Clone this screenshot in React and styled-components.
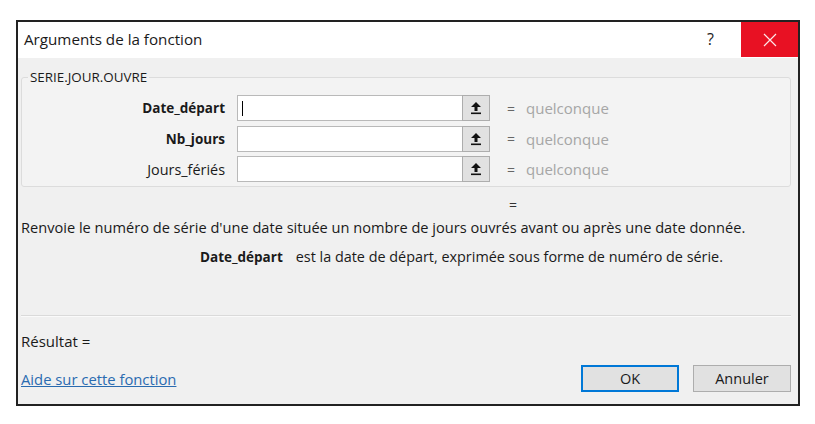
import React from "react";
import styled, { createGlobalStyle } from "styled-components";

const Global = createGlobalStyle`
  html, body { margin: 0; padding: 0; background: #ffffff; }
  body { font-family: "Open Sans", "Noto Sans", sans-serif; color: #000; }
  #root { padding: 20px 0 0 16px; }
  * { box-sizing: border-box; }
`;

const Dialog = styled.div`
  width: 784px;
  height: 386px;
  border: 2px solid #222;
  background: #f0f0f0;
  display: flex;
  flex-direction: column;
`;

const TitleBar = styled.div`
  height: 36px;
  background: #fff;
  display: flex;
  align-items: flex-start;
  flex-shrink: 0;
`;

const Title = styled.div`
  flex: 1;
  padding: 7px 0 0 6px;
  font-size: 15.2px;
  color: #1a1a1a;
`;

const Help = styled.div`
  width: 57px;
  padding-top: 6px;
  text-align: center;
  font-size: 16px;
  color: #222;
  margin-right: 2px;
`;

const Close = styled.div`
  width: 57px;
  height: 35px;
  background: #e81123;
  display: flex;
  align-items: center;
  justify-content: center;
`;

const Body = styled.div`
  flex: 1;
  display: flex;
  flex-direction: column;
  padding: 10px 7px 0 3px;
`;

const Group = styled.fieldset`
  margin: 0;
  border: 1px solid #dcdcdc;
  border-radius: 3px;
  background: #f3f3f3;
  padding: 9px 0 4px 6px;
  display: grid;
  grid-template-columns: 209px 225px 28px auto;
  grid-auto-rows: 26px;
  row-gap: 4.5px;
  align-items: center;
`;

const Legend = styled.legend`
  padding: 0 2px;
  font-size: 13.4px;
  line-height: 18px;
  color: #1a1a1a;
`;

const Label = styled.div`
  text-align: right;
  padding-right: 12px;
  font-size: ${(p) => (p.$bold ? "13.5px" : "14.4px")};
  font-weight: ${(p) => (p.$bold ? 700 : 400)};
  color: #1a1a1a;
`;

const Input = styled.div`
  height: 26px;
  background: #fff;
  border: 1px solid #b9b9b9;
  border-right: none;
  display: flex;
  align-items: center;
  padding-left: 4px;
`;

const Caret = styled.span`
  width: 1px;
  height: 15px;
  background: #000;
`;

const PickBtn = styled.div`
  height: 26px;
  background: #e1e1e1;
  border: 1px solid #adadad;
  display: flex;
  align-items: center;
  justify-content: center;
`;

const Value = styled.div`
  padding-left: 17px;
  font-size: 15px;
  color: #a6a6a6;
  display: flex;
  align-items: center;
  gap: 11px;
`;

const Eq = styled.span`
  color: #666;
  font-size: 14px;
`;

const CenterEq = styled.div`
  margin: 10px 0 0 488px;
  font-size: 14px;
  height: 16px;
  line-height: 16px;
  color: #333;
`;

const Desc = styled.div`
  margin-top: 4px;
  font-size: 14.6px;
  color: #1a1a1a;
  line-height: 20px;
  white-space: nowrap;
`;

const ParamDesc = styled.div`
  margin-top: 10px;
  padding-left: 179px;
  line-height: 20px;
  color: #1a1a1a;
  display: flex;
  gap: 13px;
  white-space: nowrap;
`;

const Bold = styled.b`
  font-weight: 700;
  font-size: 13.5px;
`;

const ParamText = styled.span`
  font-size: 14.4px;
`;

const Separator = styled.div`
  margin-top: 48px;
  height: 2px;
  border-top: 1px solid #dadada;
  border-bottom: 1px solid #fafafa;
`;

const Result = styled.div`
  margin-top: 14px;
  font-size: 15px;
  line-height: 20px;
  color: #1a1a1a;
`;

const Footer = styled.div`
  margin-top: 14px;
  display: flex;
  align-items: center;
`;

const HelpLink = styled.a`
  flex: 1;
  font-size: 14.8px;
  color: #2a6bb0;
  text-decoration: underline;
  cursor: pointer;
`;

const Button = styled.div`
  width: 98px;
  height: 27px;
  background: #e1e1e1;
  border: ${(p) => (p.$default ? "2px solid #0078d7" : "1px solid #adadad")};
  display: flex;
  align-items: center;
  justify-content: center;
  font-size: 14.5px;
  color: #1a1a1a;
  margin-left: ${(p) => p.$gap || 0}px;
`;

const ArrowIcon = () => (
  <svg width="12" height="14" viewBox="0 0 12 14">
    <path d="M6 1 L11 6 L7.5 6 L7.5 10 L4.5 10 L4.5 6 L1 6 Z" fill="#111" />
    <rect x="1" y="11.5" width="10" height="1.6" fill="#111" />
  </svg>
);

const CloseIcon = () => (
  <svg width="14" height="14" viewBox="0 0 14 14">
    <path d="M1 1 L13 13 M13 1 L1 13" stroke="#fde7e9" strokeWidth="1.2" />
  </svg>
);

const args = [
  { name: "Date_départ", bold: true, caret: true },
  { name: "Nb_jours", bold: true },
  { name: "Jours_fériés", bold: false },
];

export default function App() {
  return (
    <>
      <Global />
      <Dialog>
        <TitleBar>
          <Title>Arguments de la fonction</Title>
          <Help>?</Help>
          <Close>
            <CloseIcon />
          </Close>
        </TitleBar>
        <Body>
          <Group>
            <Legend>SERIE.JOUR.OUVRE</Legend>
            {args.map((a) => (
              <React.Fragment key={a.name}>
                <Label $bold={a.bold}>{a.name}</Label>
                <Input>{a.caret && <Caret />}</Input>
                <PickBtn>
                  <ArrowIcon />
                </PickBtn>
                <Value>
                  <Eq>=</Eq>
                  <span>quelconque</span>
                </Value>
              </React.Fragment>
            ))}
          </Group>
          <CenterEq>=</CenterEq>
          <Desc>
            Renvoie le numéro de série d'une date située un nombre de jours ouvrés avant ou après une date donnée.
          </Desc>
          <ParamDesc>
            <Bold>Date_départ</Bold>
            <ParamText>est la date de départ, exprimée sous forme de numéro de série.</ParamText>
          </ParamDesc>
          <Separator />
          <Result>Résultat =</Result>
          <Footer>
            <HelpLink>Aide sur cette fonction</HelpLink>
            <Button $default>OK</Button>
            <Button $gap={14}>Annuler</Button>
          </Footer>
        </Body>
      </Dialog>
    </>
  );
}
